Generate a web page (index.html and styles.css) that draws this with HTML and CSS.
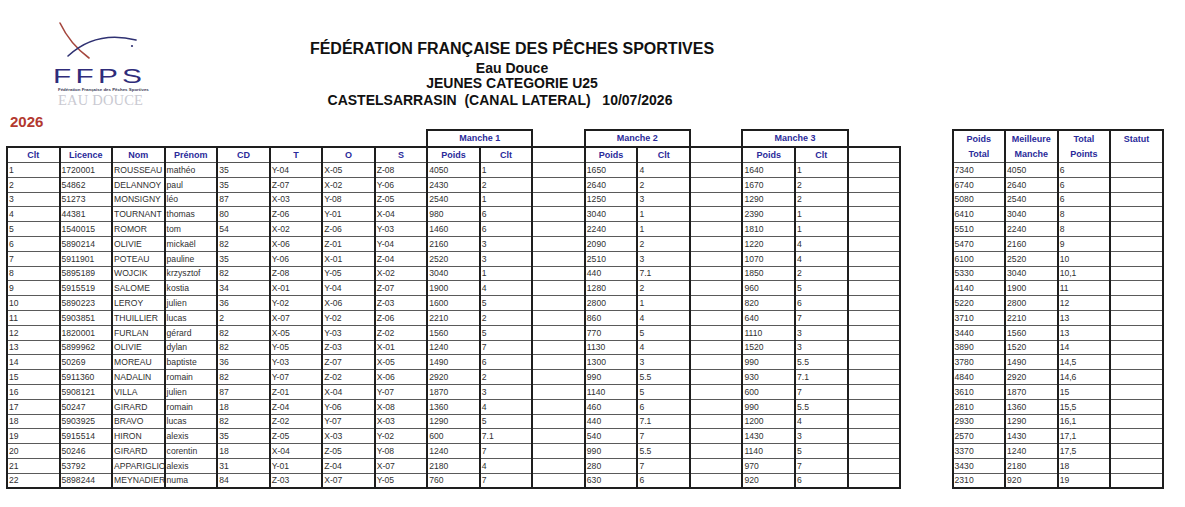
FILE: index.html
```html
<!DOCTYPE html>
<html lang="fr">
<head>
<meta charset="utf-8">
<title>FFPS - Jeunes U25 - Castelsarrasin</title>
<link rel="stylesheet" href="styles.css">
</head>
<body>
<div class="page">
  <header class="top">
    <div class="logo">
      <svg class="logo-mark" width="100" height="44" viewBox="0 0 100 44">
        <path d="M10 3 Q 20 24 39 38" fill="none" stroke="#a5463d" stroke-width="1.6" stroke-linecap="round"/>
        <path d="M18 36 Q 46 10 86 20" fill="none" stroke="#2f3172" stroke-width="1.6" stroke-linecap="round"/>
        <circle cx="82" cy="26" r="1.1" fill="#2f3172"/>
      </svg>
      <div class="logo-ffps">FFPS</div>
      <div class="logo-sub">Fédération Française des Pêches Sportives</div>
      <div class="logo-eau">EAU DOUCE</div>
    </div>
    <div class="titles">
      <div class="t1">FÉDÉRATION FRANÇAISE DES PÊCHES SPORTIVES</div>
      <div class="t2">Eau Douce</div>
      <div class="t3">JEUNES CATEGORIE U25</div>
      <div class="t4">CASTELSARRASIN  (CANAL LATERAL)   10/07/2026</div>
    </div>
  </header>
  <div class="year">2026</div>
  <table class="results">
    <thead>
      <tr class="h1">
        <td class="e" colspan="8"></td>
        <th class="box" colspan="2">Manche 1</th>
        <td class="e"></td>
        <th class="box" colspan="2">Manche 2</th>
        <td class="e"></td>
        <th class="box" colspan="2">Manche 3</th>
        <td class="e" colspan="2"></td>
        <th class="tall" rowspan="2">Poids<br>Total</th>
        <th class="tall" rowspan="2">Meilleure<br>Manche</th>
        <th class="tall" rowspan="2">Total<br>Points</th>
        <th class="tall" rowspan="2">Statut</th>
      </tr>
      <tr class="h2">
        <th>Clt</th><th>Licence</th><th>Nom</th><th>Prénom</th><th>CD</th><th>T</th><th>O</th><th>S</th>
        <th>Poids</th><th>Clt</th><th></th>
        <th>Poids</th><th>Clt</th><th></th>
        <th>Poids</th><th>Clt</th><th></th>
        <th class="g"></th>
      </tr>
    </thead>
    <tbody>
      <tr><td>1</td><td>1720001</td><td>ROUSSEAU</td><td>mathéo</td><td>35</td><td>Y-04</td><td>X-05</td><td>Z-08</td><td>4050</td><td>1</td><td></td><td>1650</td><td>4</td><td></td><td>1640</td><td>1</td><td></td><td class="g"></td><td>7340</td><td>4050</td><td>6</td><td></td></tr>
      <tr><td>2</td><td>54862</td><td>DELANNOY</td><td>paul</td><td>35</td><td>Z-07</td><td>X-02</td><td>Y-06</td><td>2430</td><td>2</td><td></td><td>2640</td><td>2</td><td></td><td>1670</td><td>2</td><td></td><td class="g"></td><td>6740</td><td>2640</td><td>6</td><td></td></tr>
      <tr><td>3</td><td>51273</td><td>MONSIGNY</td><td>léo</td><td>87</td><td>X-03</td><td>Y-08</td><td>Z-05</td><td>2540</td><td>1</td><td></td><td>1250</td><td>3</td><td></td><td>1290</td><td>2</td><td></td><td class="g"></td><td>5080</td><td>2540</td><td>6</td><td></td></tr>
      <tr><td>4</td><td>44381</td><td>TOURNANT</td><td>thomas</td><td>80</td><td>Z-06</td><td>Y-01</td><td>X-04</td><td>980</td><td>6</td><td></td><td>3040</td><td>1</td><td></td><td>2390</td><td>1</td><td></td><td class="g"></td><td>6410</td><td>3040</td><td>8</td><td></td></tr>
      <tr><td>5</td><td>1540015</td><td>ROMOR</td><td>tom</td><td>54</td><td>X-02</td><td>Z-06</td><td>Y-03</td><td>1460</td><td>6</td><td></td><td>2240</td><td>1</td><td></td><td>1810</td><td>1</td><td></td><td class="g"></td><td>5510</td><td>2240</td><td>8</td><td></td></tr>
      <tr><td>6</td><td>5890214</td><td>OLIVIE</td><td>mickaël</td><td>82</td><td>X-06</td><td>Z-01</td><td>Y-04</td><td>2160</td><td>3</td><td></td><td>2090</td><td>2</td><td></td><td>1220</td><td>4</td><td></td><td class="g"></td><td>5470</td><td>2160</td><td>9</td><td></td></tr>
      <tr><td>7</td><td>5911901</td><td>POTEAU</td><td>pauline</td><td>35</td><td>Y-06</td><td>X-01</td><td>Z-04</td><td>2520</td><td>3</td><td></td><td>2510</td><td>3</td><td></td><td>1070</td><td>4</td><td></td><td class="g"></td><td>6100</td><td>2520</td><td>10</td><td></td></tr>
      <tr><td>8</td><td>5895189</td><td>WOJCIK</td><td>krzysztof</td><td>82</td><td>Z-08</td><td>Y-05</td><td>X-02</td><td>3040</td><td>1</td><td></td><td>440</td><td>7.1</td><td></td><td>1850</td><td>2</td><td></td><td class="g"></td><td>5330</td><td>3040</td><td>10,1</td><td></td></tr>
      <tr><td>9</td><td>5915519</td><td>SALOME</td><td>kostia</td><td>34</td><td>X-01</td><td>Y-04</td><td>Z-07</td><td>1900</td><td>4</td><td></td><td>1280</td><td>2</td><td></td><td>960</td><td>5</td><td></td><td class="g"></td><td>4140</td><td>1900</td><td>11</td><td></td></tr>
      <tr><td>10</td><td>5890223</td><td>LEROY</td><td>julien</td><td>36</td><td>Y-02</td><td>X-06</td><td>Z-03</td><td>1600</td><td>5</td><td></td><td>2800</td><td>1</td><td></td><td>820</td><td>6</td><td></td><td class="g"></td><td>5220</td><td>2800</td><td>12</td><td></td></tr>
      <tr><td>11</td><td>5903851</td><td>THUILLIER</td><td>lucas</td><td>2</td><td>X-07</td><td>Y-02</td><td>Z-06</td><td>2210</td><td>2</td><td></td><td>860</td><td>4</td><td></td><td>640</td><td>7</td><td></td><td class="g"></td><td>3710</td><td>2210</td><td>13</td><td></td></tr>
      <tr><td>12</td><td>1820001</td><td>FURLAN</td><td>gérard</td><td>82</td><td>X-05</td><td>Y-03</td><td>Z-02</td><td>1560</td><td>5</td><td></td><td>770</td><td>5</td><td></td><td>1110</td><td>3</td><td></td><td class="g"></td><td>3440</td><td>1560</td><td>13</td><td></td></tr>
      <tr><td>13</td><td>5899962</td><td>OLIVIE</td><td>dylan</td><td>82</td><td>Y-05</td><td>Z-03</td><td>X-01</td><td>1240</td><td>7</td><td></td><td>1130</td><td>4</td><td></td><td>1520</td><td>3</td><td></td><td class="g"></td><td>3890</td><td>1520</td><td>14</td><td></td></tr>
      <tr><td>14</td><td>50269</td><td>MOREAU</td><td>baptiste</td><td>36</td><td>Y-03</td><td>Z-07</td><td>X-05</td><td>1490</td><td>6</td><td></td><td>1300</td><td>3</td><td></td><td>990</td><td>5.5</td><td></td><td class="g"></td><td>3780</td><td>1490</td><td>14,5</td><td></td></tr>
      <tr><td>15</td><td>5911360</td><td>NADALIN</td><td>romain</td><td>82</td><td>Y-07</td><td>Z-02</td><td>X-06</td><td>2920</td><td>2</td><td></td><td>990</td><td>5.5</td><td></td><td>930</td><td>7.1</td><td></td><td class="g"></td><td>4840</td><td>2920</td><td>14,6</td><td></td></tr>
      <tr><td>16</td><td>5908121</td><td>VILLA</td><td>julien</td><td>87</td><td>Z-01</td><td>X-04</td><td>Y-07</td><td>1870</td><td>3</td><td></td><td>1140</td><td>5</td><td></td><td>600</td><td>7</td><td></td><td class="g"></td><td>3610</td><td>1870</td><td>15</td><td></td></tr>
      <tr><td>17</td><td>50247</td><td>GIRARD</td><td>romain</td><td>18</td><td>Z-04</td><td>Y-06</td><td>X-08</td><td>1360</td><td>4</td><td></td><td>460</td><td>6</td><td></td><td>990</td><td>5.5</td><td></td><td class="g"></td><td>2810</td><td>1360</td><td>15,5</td><td></td></tr>
      <tr><td>18</td><td>5903925</td><td>BRAVO</td><td>lucas</td><td>82</td><td>Z-02</td><td>Y-07</td><td>X-03</td><td>1290</td><td>5</td><td></td><td>440</td><td>7.1</td><td></td><td>1200</td><td>4</td><td></td><td class="g"></td><td>2930</td><td>1290</td><td>16,1</td><td></td></tr>
      <tr><td>19</td><td>5915514</td><td>HIRON</td><td>alexis</td><td>35</td><td>Z-05</td><td>X-03</td><td>Y-02</td><td>600</td><td>7.1</td><td></td><td>540</td><td>7</td><td></td><td>1430</td><td>3</td><td></td><td class="g"></td><td>2570</td><td>1430</td><td>17,1</td><td></td></tr>
      <tr><td>20</td><td>50246</td><td>GIRARD</td><td>corentin</td><td>18</td><td>X-04</td><td>Z-05</td><td>Y-08</td><td>1240</td><td>7</td><td></td><td>990</td><td>5.5</td><td></td><td>1140</td><td>5</td><td></td><td class="g"></td><td>3370</td><td>1240</td><td>17,5</td><td></td></tr>
      <tr><td>21</td><td>53792</td><td>APPARIGLIO</td><td>alexis</td><td>31</td><td>Y-01</td><td>Z-04</td><td>X-07</td><td>2180</td><td>4</td><td></td><td>280</td><td>7</td><td></td><td>970</td><td>7</td><td></td><td class="g"></td><td>3430</td><td>2180</td><td>18</td><td></td></tr>
      <tr><td>22</td><td>5898244</td><td>MEYNADIER</td><td>numa</td><td>84</td><td>Z-03</td><td>X-07</td><td>Y-05</td><td>760</td><td>7</td><td></td><td>630</td><td>6</td><td></td><td>920</td><td>6</td><td></td><td class="g"></td><td>2310</td><td>920</td><td>19</td><td></td></tr>
    </tbody>
  </table>
</div>
</body>
</html>
```
FILE: styles.css
```css
html, body {
  margin: 0;
  padding: 0;
  background: #ffffff;
}

body {
  font-family: "Liberation Sans", Arial, sans-serif;
  color: #2b2b2b;
}

.page {
  width: 1185px;
  height: 507px;
  overflow: hidden;
}

/* ---------- header ---------- */
.top {
  display: flex;
  height: 114px;
}

.logo {
  width: 100px;
  margin-left: 50px;
  padding-top: 20px;
  display: flex;
  flex-direction: column;
  align-items: flex-start;
}

.logo-mark {
  display: block;
}

.logo-ffps {
  margin-top: 2px;
  margin-left: 3px;
  font-size: 21px;
  line-height: 20px;
  letter-spacing: 3px;
  color: #2f2c7a;
  transform: scaleX(1.42);
  transform-origin: left center;
}

.logo-sub {
  margin-top: 1px;
  margin-left: 8px;
  font-size: 4.4px;
  line-height: 5px;
  font-weight: bold;
  color: #3a3a55;
  white-space: nowrap;
}

.logo-eau {
  margin-top: 1.5px;
  margin-left: 8px;
  font-family: "Liberation Serif", "Times New Roman", serif;
  font-size: 14.5px;
  line-height: 13px;
  letter-spacing: 0.2px;
  color: #cacad2;
  white-space: nowrap;
}

.titles {
  width: 724px;
  text-align: center;
  font-weight: bold;
  color: #111;
}

.t1 {
  margin-top: 40px;
  font-size: 16px;
  line-height: 18px;
}

.t2 {
  margin-top: 3px;
  font-size: 14px;
  line-height: 14px;
}

.t3 {
  margin-top: 1px;
  font-size: 14px;
  line-height: 14px;
}

.t4 {
  margin-top: 3px;
  margin-right: 24px;
  font-size: 14px;
  line-height: 14px;
  white-space: pre;
}

.year {
  margin-left: 10px;
  height: 15px;
  font-size: 15px;
  line-height: 15px;
  font-weight: bold;
  color: #b3392f;
}

/* ---------- results table ---------- */
.results {
  border-collapse: collapse;
  table-layout: fixed;
  width: 1158px;
  margin-left: 6px;
  margin-top: 0;
}

.results th,
.results td {
  padding: 0 0 0 1px;
  overflow: hidden;
  white-space: nowrap;
  border: none;
}

.results th {
  font-size: 9px;
  font-weight: bold;
  color: #2a2a9a;
  text-align: center;
  padding: 0;
}

.results tr.h1 {
  height: 15.5px;
}

.results tr.h1 th.box {
  border: 2px solid #1e1e1e;
  line-height: 13px;
}

.results tr.h1 th.tall {
  border: 2px solid #1e1e1e;
  border-bottom: 1px solid #555;
  vertical-align: top;
  line-height: 15px;
  padding-top: 1px;
}

.results tr.h2 {
  height: 14px;
}

.results tr.h2 th {
  border-top: 2px solid #1e1e1e;
  border-left: 2px solid #1e1e1e;
  border-right: 2px solid #1e1e1e;
  border-bottom: 1px solid #555;
  line-height: 12px;
}

.results tbody tr {
  height: 14.8px;
}

.results tbody td {
  font-size: 8.6px;
  line-height: 10px;
  color: #303030;
  border-left: 2px solid #1e1e1e;
  border-right: 2px solid #1e1e1e;
  border-bottom: 1px solid #5a5a5a;
}

.results tbody tr:last-child td {
  border-bottom: 2px solid #1e1e1e;
}

.results tr.h2 th.g,
.results tbody td.g,
.results tbody tr:last-child td.g {
  border: none;
}
```
